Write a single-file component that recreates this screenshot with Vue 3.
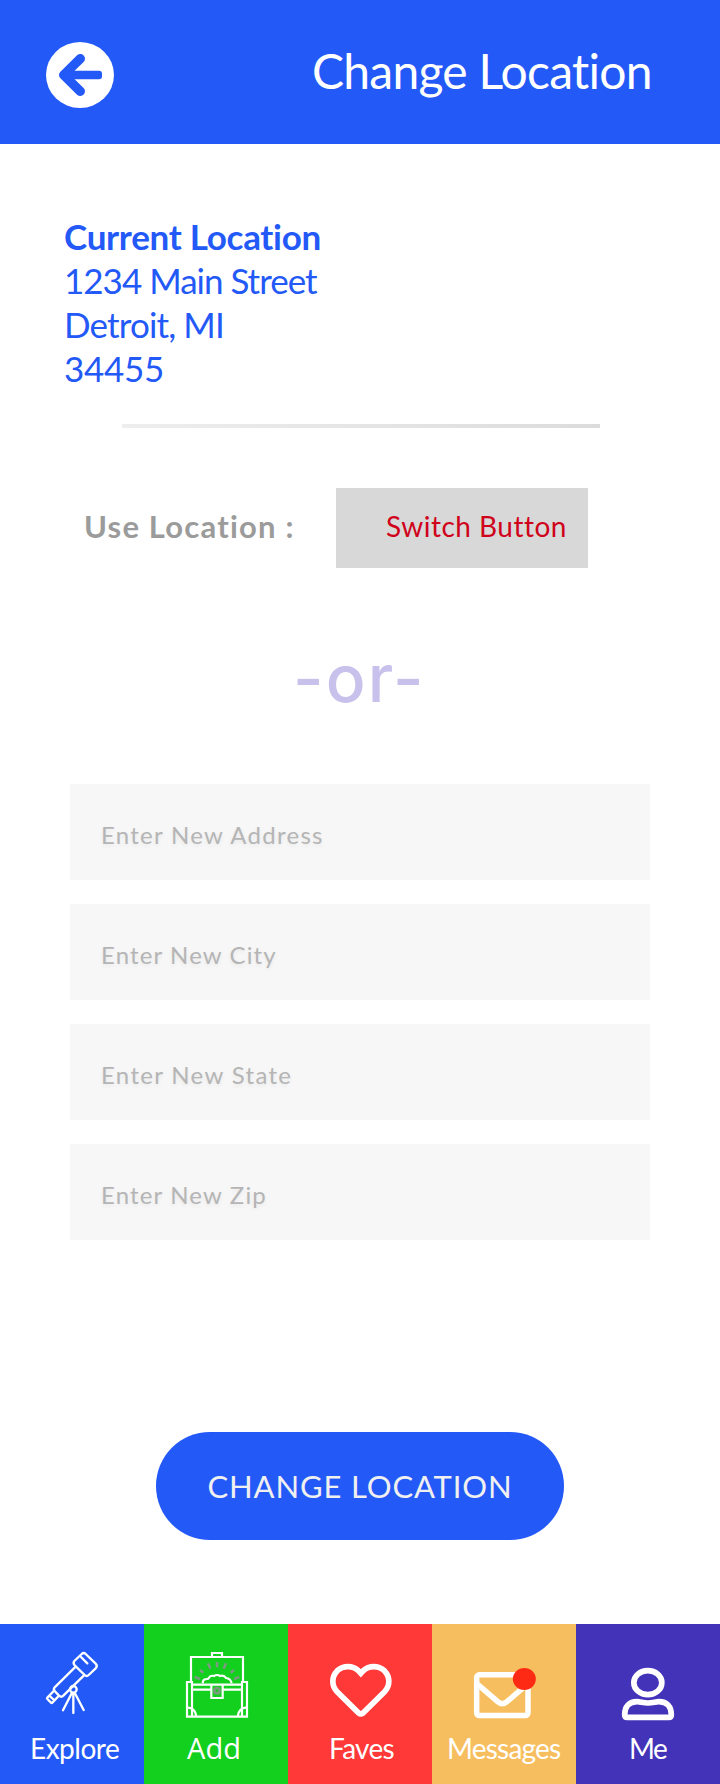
<script setup>
const fields = [
  { key: 'address', text: 'Enter New Address' },
  { key: 'city', text: 'Enter New City' },
  { key: 'state', text: 'Enter New State' },
  { key: 'zip', text: 'Enter New Zip' },
]
</script>

<template>
  <div class="screen">
    <header class="header">
      <svg class="back" viewBox="138 126 204 198" preserveAspectRatio="none">
        <ellipse cx="240" cy="225" rx="102" ry="99" fill="#fff" />
        <path d="M241 176 191 225 241 274" fill="none" stroke="#2359f7" stroke-width="28" stroke-linecap="round" stroke-linejoin="round" />
        <path d="M190 212H297Q306 212 306 221V229Q306 238 297 238H190Z" fill="#2359f7" />
      </svg>
      <h1 class="title">Change Location</h1>
    </header>

    <main class="content">
      <section class="current">
        <h2 class="current-title">Current Location</h2>
        <p class="street">1234 Main Street</p>
        <p class="city">Detroit, MI</p>
        <p class="zip">34455</p>
      </section>

      <div class="divider"></div>

      <div class="use-row">
        <span class="use-label">Use Location :</span>
        <div class="switch">Switch Button</div>
      </div>

      <p class="or">-or-</p>

      <form class="fields">
        <div v-for="f in fields" :key="f.key" class="field" :class="'field-' + f.key">{{ f.text }}</div>
      </form>

      <button class="submit" type="button">CHANGE LOCATION</button>
    </main>

    <nav class="tabs">
      <a class="tab explore">
        <svg class="icon" viewBox="0 42 432 318" fill="none" stroke="#fff" stroke-width="7" stroke-linecap="round" stroke-linejoin="round">
          <path d="M223 153 245 132Q251 126 257 132L287 161Q294 168 287 175L266 195Q260 201 254 195L224 166Q218 159 223 153Z" />
          <path d="M243 141 262 160" />
          <path d="M227 170 164 232Q159 238 164 243L177 257Q184 263 190 257L252 196" />
          <path d="M161 243 142 263Q140 265 142 267L153 278Q155 280 157 278L176 258M148 257l14 13" />
          <circle cx="220" cy="238" r="10" />
          <path d="M220 250V309M214 252 189 301M226 252 251 300" />
        </svg>
        <span class="label">Explore</span>
      </a>
      <a class="tab add">
        <svg class="icon" viewBox="12 42 432 318" fill="none" stroke="#fff" stroke-width="6.500">
          <path d="M153 215V141H309V215M216 140V129H246V140" />
          <path d="M141 216H156V319M321 216H306V319M141 213V320H321V213M156 224H306M156 239H213M249 239H306" />
          <path d="M214 222V264H248V222" />
          <path d="M142 292Q167 294 169 320M320 292Q295 294 293 320" />
          <path d="M188 220Q188 207 201 207Q205 207 207 203Q212 195 222 198Q231 192 240 198Q252 194 258 204Q272 205 275 220" />
          <g stroke="#7c9a80" stroke-width="7.500">
            <circle cx="231" cy="242" r="8" />
            <path d="M231 156V172M204 160 211 176M258 160 251 176M180 180 190 188M282 180 272 188M164 201 180 207M298 201 282 207" />
          </g>
        </svg>
        <span class="label">Add</span>
      </a>
      <a class="tab faves">
        <svg class="icon" viewBox="24 42 432 318" fill="none" stroke="#fff" stroke-width="17">
          <path d="M242.500 190 235 182C218 166 190 166 172 182C154 200 154 228 172 246L236 309Q242.500 314 249 309L313 246C331 228 331 200 313 182C295 166 267 166 250 182Z" />
        </svg>
        <span class="label">Faves</span>
      </a>
      <a class="tab messages">
        <svg class="icon" viewBox="21 42 432 318" fill="none" stroke="#fff" stroke-width="16.500">
          <rect x="155" y="194.500" width="154" height="122" rx="8" />
          <path d="M158 223 218 275Q232 287 246 275L306 223" />
          <ellipse cx="298" cy="207" rx="34.500" ry="33" fill="#ff2a14" stroke="none" />
        </svg>
        <span class="label">Messages</span>
      </a>
      <a class="tab me">
        <svg class="icon" viewBox="453 42 432 318" fill="none" stroke="#fff" stroke-width="17">
          <ellipse cx="668.500" cy="218" rx="42" ry="36" />
          <path d="M607 322Q599 322 599 314C599 290 612 275 636 275C648 275 652 279 669 279C686 279 690 275 702 275C726 275 739 290 739 314Q739 322 731 322Z" />
        </svg>
        <span class="label">Me</span>
      </a>
    </nav>
  </div>
</template>

<style>
body {
  margin: 0;
  background: #fff;
}
</style>

<style scoped>
.screen {
  width: 720px;
  height: 1784px;
  display: flex;
  flex-direction: column;
  background: #fff;
  font-family: Lato, "Open Sans", sans-serif;
  white-space: nowrap;
}
h1, h2, p {
  margin: 0;
  font-weight: 400;
}
.header {
  flex: none;
  height: 144px;
  box-sizing: border-box;
  padding: 41px 0 0 46px;
  display: flex;
  align-items: flex-start;
  background: #2359f7;
}
.back {
  width: 68px;
  height: 66px;
  margin-top: 1px;
}
.title {
  margin-left: 198px;
  font-size: 48px;
  line-height: 60px;
  letter-spacing: -0.75px;
  color: #fff;
}
.content {
  flex: 1;
  display: flex;
  flex-direction: column;
}
.current {
  padding: 70px 0 0 64px;
  font-size: 35px;
  line-height: 44px;
  color: #2359f7;
}
.current-title {
  font-size: 35px;
  font-weight: 700;
  letter-spacing: -0.28px;
}
.street {
  letter-spacing: -1px;
}
.city {
  letter-spacing: -0.85px;
}
.zip {
  letter-spacing: -0.3px;
}
.divider {
  width: 478px;
  height: 4px;
  margin: 34px 0 0 122px;
  background: linear-gradient(90deg, #eee, #dcdcdc);
}
.use-row {
  display: flex;
  align-items: flex-start;
  width: 588px;
  height: 80px;
  margin-top: 60px;
}
.use-label {
  flex: 1;
  padding: 18px 0 0 84px;
  font-size: 31px;
  font-weight: 700;
  line-height: 40px;
  letter-spacing: 1.2px;
  color: #9b9b9b;
}
.switch {
  width: 252px;
  height: 80px;
  box-sizing: border-box;
  padding: 18px 0 0 50px;
  background: #d8d8d8;
  font-size: 28px;
  line-height: 40px;
  letter-spacing: 0.5px;
  color: #d0021b;
}
.or {
  margin: 70px 0 0 293px;
  font-family: Inter, sans-serif;
  font-size: 66px;
  font-weight: 500;
  line-height: 80px;
  letter-spacing: 2.2px;
  color: #c8c1eb;
}
.fields {
  display: grid;
  gap: 24px;
  margin: 66px 70px 0;
}
.field {
  height: 96px;
  box-sizing: border-box;
  padding: 36px 0 0 31px;
  background: #f7f7f7;
  font-size: 24px;
  line-height: 30px;
  letter-spacing: 1.27px;
  color: #b5b5b5;
  text-shadow: 0 2px 4px rgba(0, 0, 0, 0.07);
}
.field-city {
  letter-spacing: 1.12px;
}
.field-state {
  letter-spacing: 1.33px;
}
.field-zip {
  letter-spacing: 1.15px;
}
.submit {
  align-self: center;
  width: 408px;
  height: 108px;
  margin-top: 192px;
  padding: 0 0 1px;
  border: 0;
  border-radius: 54px;
  background: #2359f7;
  font: 400 31px/40px Lato, sans-serif;
  letter-spacing: 0.85px;
  color: #f0f0f0;
}
.tabs {
  flex: none;
  display: grid;
  grid-template-columns: repeat(5, 144px);
  height: 160px;
}
.tab {
  display: flex;
  flex-direction: column;
}
.icon {
  width: 144px;
  height: 106px;
  margin-bottom: 1px;
}
.label {
  font-size: 28px;
  line-height: 34px;
  color: #fff;
}
.explore {
  background: #2359f7;
}
.explore .label {
  padding-left: 30px;
  letter-spacing: -0.5px;
}
.add {
  background: #13d01e;
}
.add .label {
  padding-left: 43px;
  font-family: "Open Sans", sans-serif;
  font-size: 29px;
  letter-spacing: 0.1px;
}
.faves {
  background: #ff3838;
}
.faves .label {
  padding-left: 41px;
  letter-spacing: -0.7px;
}
.messages {
  background: #f7be5f;
}
.messages .label {
  padding-left: 15px;
  letter-spacing: -0.8px;
}
.me {
  background: #4233b9;
}
.me .label {
  padding-left: 53px;
  letter-spacing: -1.5px;
}
</style>
